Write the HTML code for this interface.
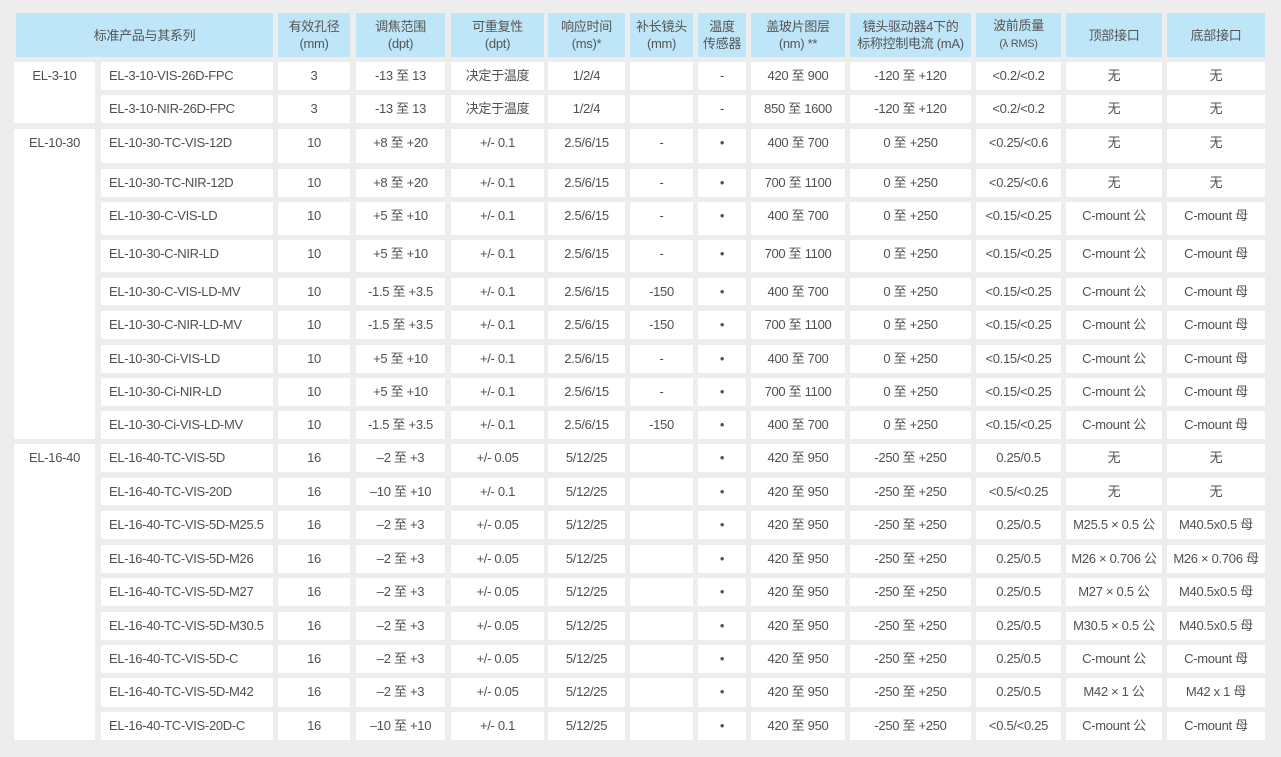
<!DOCTYPE html>
<html><head><meta charset="utf-8"><style>
body{margin:0;width:1281px;height:757px;background:#ededed;position:relative;overflow:hidden;font-family:"Liberation Sans","Noto Sans CJK SC",sans-serif;color:#505050;font-size:13px;letter-spacing:-0.3px}
.r{position:absolute;left:0;width:1281px}
.r>div{position:absolute;top:0;height:100%;background:#fff;text-align:center;line-height:28px;white-space:nowrap;overflow:hidden}
.h>div{background:#bee6f8;line-height:17px;display:flex;align-items:center;justify-content:center;color:#555}
.h>div>span{display:block;text-align:center}
.c0{left:14px;width:81px}.c1{left:101px;width:172px;text-align:left!important;padding-left:8px;box-sizing:border-box}
.c2{left:278px;width:72px}.c3{left:356px;width:89px}.c4{left:451px;width:93px}.c5{left:548px;width:77px}
.c6{left:630px;width:63px}.c7{left:698px;width:48px}.c8{left:751px;width:94px}.c9{left:850px;width:121px}
.c10{left:976px;width:85px}.c11{left:1066px;width:96px}.c12{left:1167px;width:98px}
.g{position:absolute;left:14px;width:81px;background:#fff;text-align:center;line-height:28px}
.s{font-size:11px}
</style></head><body>
<div class="r h" style="top:13px;height:44px">
<div style="left:16px;width:257px"><span>标准产品与其系列</span></div>
<div class="c2"><span>有效孔径<br>(mm)</span></div><div class="c3"><span>调焦范围<br>(dpt)</span></div><div class="c4"><span>可重复性<br>(dpt)</span></div>
<div class="c5"><span>响应时间<br>(ms)*</span></div><div class="c6"><span>补长镜头<br>(mm)</span></div><div class="c7"><span>温度<br>传感器</span></div>
<div class="c8"><span>盖玻片图层<br>(nm) **</span></div><div class="c9"><span>镜头驱动器4下的<br>标称控制电流 (mA)</span></div>
<div class="c10"><span>波前质量<br><span class="s">(λ RMS)</span></span></div><div class="c11"><span>顶部接口</span></div><div class="c12"><span>底部接口</span></div>
</div>
<div class="g" style="top:62px;height:61px">EL-3-10</div>
<div class="g" style="top:129px;height:310px">EL-10-30</div>
<div class="g" style="top:444px;height:296px">EL-16-40</div>

<div class="r" style="top:62px;height:28px"><div class="c1">EL-3-10-VIS-26D-FPC</div><div class="c2">3</div><div class="c3">-13 至 13</div><div class="c4">决定于温度</div><div class="c5">1/2/4</div><div class="c6"></div><div class="c7">-</div><div class="c8">420 至 900</div><div class="c9">-120 至 +120</div><div class="c10">&lt;0.2/&lt;0.2</div><div class="c11">无</div><div class="c12">无</div></div>
<div class="r" style="top:95px;height:28px"><div class="c1">EL-3-10-NIR-26D-FPC</div><div class="c2">3</div><div class="c3">-13 至 13</div><div class="c4">决定于温度</div><div class="c5">1/2/4</div><div class="c6"></div><div class="c7">-</div><div class="c8">850 至 1600</div><div class="c9">-120 至 +120</div><div class="c10">&lt;0.2/&lt;0.2</div><div class="c11">无</div><div class="c12">无</div></div>

<div class="r" style="top:129px;height:34px"><div class="c1">EL-10-30-TC-VIS-12D</div><div class="c2">10</div><div class="c3">+8 至 +20</div><div class="c4">+/- 0.1</div><div class="c5">2.5/6/15</div><div class="c6">-</div><div class="c7">•</div><div class="c8">400 至 700</div><div class="c9">0 至 +250</div><div class="c10">&lt;0.25/&lt;0.6</div><div class="c11">无</div><div class="c12">无</div></div>
<div class="r" style="top:169px;height:28px"><div class="c1">EL-10-30-TC-NIR-12D</div><div class="c2">10</div><div class="c3">+8 至 +20</div><div class="c4">+/- 0.1</div><div class="c5">2.5/6/15</div><div class="c6">-</div><div class="c7">•</div><div class="c8">700 至 1100</div><div class="c9">0 至 +250</div><div class="c10">&lt;0.25/&lt;0.6</div><div class="c11">无</div><div class="c12">无</div></div>
<div class="r" style="top:202px;height:33px"><div class="c1">EL-10-30-C-VIS-LD</div><div class="c2">10</div><div class="c3">+5 至 +10</div><div class="c4">+/- 0.1</div><div class="c5">2.5/6/15</div><div class="c6">-</div><div class="c7">•</div><div class="c8">400 至 700</div><div class="c9">0 至 +250</div><div class="c10">&lt;0.15/&lt;0.25</div><div class="c11">C-mount 公</div><div class="c12">C-mount 母</div></div>
<div class="r" style="top:240px;height:32px"><div class="c1">EL-10-30-C-NIR-LD</div><div class="c2">10</div><div class="c3">+5 至 +10</div><div class="c4">+/- 0.1</div><div class="c5">2.5/6/15</div><div class="c6">-</div><div class="c7">•</div><div class="c8">700 至 1100</div><div class="c9">0 至 +250</div><div class="c10">&lt;0.15/&lt;0.25</div><div class="c11">C-mount 公</div><div class="c12">C-mount 母</div></div>
<div class="r" style="top:278px;height:27px"><div class="c1">EL-10-30-C-VIS-LD-MV</div><div class="c2">10</div><div class="c3">-1.5 至 +3.5</div><div class="c4">+/- 0.1</div><div class="c5">2.5/6/15</div><div class="c6">-150</div><div class="c7">•</div><div class="c8">400 至 700</div><div class="c9">0 至 +250</div><div class="c10">&lt;0.15/&lt;0.25</div><div class="c11">C-mount 公</div><div class="c12">C-mount 母</div></div>
<div class="r" style="top:311px;height:28px"><div class="c1">EL-10-30-C-NIR-LD-MV</div><div class="c2">10</div><div class="c3">-1.5 至 +3.5</div><div class="c4">+/- 0.1</div><div class="c5">2.5/6/15</div><div class="c6">-150</div><div class="c7">•</div><div class="c8">700 至 1100</div><div class="c9">0 至 +250</div><div class="c10">&lt;0.15/&lt;0.25</div><div class="c11">C-mount 公</div><div class="c12">C-mount 母</div></div>
<div class="r" style="top:345px;height:28px"><div class="c1">EL-10-30-Ci-VIS-LD</div><div class="c2">10</div><div class="c3">+5 至 +10</div><div class="c4">+/- 0.1</div><div class="c5">2.5/6/15</div><div class="c6">-</div><div class="c7">•</div><div class="c8">400 至 700</div><div class="c9">0 至 +250</div><div class="c10">&lt;0.15/&lt;0.25</div><div class="c11">C-mount 公</div><div class="c12">C-mount 母</div></div>
<div class="r" style="top:378px;height:28px"><div class="c1">EL-10-30-Ci-NIR-LD</div><div class="c2">10</div><div class="c3">+5 至 +10</div><div class="c4">+/- 0.1</div><div class="c5">2.5/6/15</div><div class="c6">-</div><div class="c7">•</div><div class="c8">700 至 1100</div><div class="c9">0 至 +250</div><div class="c10">&lt;0.15/&lt;0.25</div><div class="c11">C-mount 公</div><div class="c12">C-mount 母</div></div>
<div class="r" style="top:411px;height:28px"><div class="c1">EL-10-30-Ci-VIS-LD-MV</div><div class="c2">10</div><div class="c3">-1.5 至 +3.5</div><div class="c4">+/- 0.1</div><div class="c5">2.5/6/15</div><div class="c6">-150</div><div class="c7">•</div><div class="c8">400 至 700</div><div class="c9">0 至 +250</div><div class="c10">&lt;0.15/&lt;0.25</div><div class="c11">C-mount 公</div><div class="c12">C-mount 母</div></div>

<div class="r" style="top:444px;height:28px"><div class="c1">EL-16-40-TC-VIS-5D</div><div class="c2">16</div><div class="c3">–2 至 +3</div><div class="c4">+/- 0.05</div><div class="c5">5/12/25</div><div class="c6"></div><div class="c7">•</div><div class="c8">420 至 950</div><div class="c9">-250 至 +250</div><div class="c10">0.25/0.5</div><div class="c11">无</div><div class="c12">无</div></div>
<div class="r" style="top:478px;height:27px"><div class="c1">EL-16-40-TC-VIS-20D</div><div class="c2">16</div><div class="c3">–10 至 +10</div><div class="c4">+/- 0.1</div><div class="c5">5/12/25</div><div class="c6"></div><div class="c7">•</div><div class="c8">420 至 950</div><div class="c9">-250 至 +250</div><div class="c10">&lt;0.5/&lt;0.25</div><div class="c11">无</div><div class="c12">无</div></div>
<div class="r" style="top:511px;height:28px"><div class="c1">EL-16-40-TC-VIS-5D-M25.5</div><div class="c2">16</div><div class="c3">–2 至 +3</div><div class="c4">+/- 0.05</div><div class="c5">5/12/25</div><div class="c6"></div><div class="c7">•</div><div class="c8">420 至 950</div><div class="c9">-250 至 +250</div><div class="c10">0.25/0.5</div><div class="c11">M25.5 × 0.5 公</div><div class="c12">M40.5x0.5 母</div></div>
<div class="r" style="top:545px;height:28px"><div class="c1">EL-16-40-TC-VIS-5D-M26</div><div class="c2">16</div><div class="c3">–2 至 +3</div><div class="c4">+/- 0.05</div><div class="c5">5/12/25</div><div class="c6"></div><div class="c7">•</div><div class="c8">420 至 950</div><div class="c9">-250 至 +250</div><div class="c10">0.25/0.5</div><div class="c11">M26 × 0.706 公</div><div class="c12">M26 × 0.706 母</div></div>
<div class="r" style="top:578px;height:28px"><div class="c1">EL-16-40-TC-VIS-5D-M27</div><div class="c2">16</div><div class="c3">–2 至 +3</div><div class="c4">+/- 0.05</div><div class="c5">5/12/25</div><div class="c6"></div><div class="c7">•</div><div class="c8">420 至 950</div><div class="c9">-250 至 +250</div><div class="c10">0.25/0.5</div><div class="c11">M27 × 0.5 公</div><div class="c12">M40.5x0.5 母</div></div>
<div class="r" style="top:612px;height:28px"><div class="c1">EL-16-40-TC-VIS-5D-M30.5</div><div class="c2">16</div><div class="c3">–2 至 +3</div><div class="c4">+/- 0.05</div><div class="c5">5/12/25</div><div class="c6"></div><div class="c7">•</div><div class="c8">420 至 950</div><div class="c9">-250 至 +250</div><div class="c10">0.25/0.5</div><div class="c11">M30.5 × 0.5 公</div><div class="c12">M40.5x0.5 母</div></div>
<div class="r" style="top:645px;height:28px"><div class="c1">EL-16-40-TC-VIS-5D-C</div><div class="c2">16</div><div class="c3">–2 至 +3</div><div class="c4">+/- 0.05</div><div class="c5">5/12/25</div><div class="c6"></div><div class="c7">•</div><div class="c8">420 至 950</div><div class="c9">-250 至 +250</div><div class="c10">0.25/0.5</div><div class="c11">C-mount 公</div><div class="c12">C-mount 母</div></div>
<div class="r" style="top:678px;height:29px"><div class="c1">EL-16-40-TC-VIS-5D-M42</div><div class="c2">16</div><div class="c3">–2 至 +3</div><div class="c4">+/- 0.05</div><div class="c5">5/12/25</div><div class="c6"></div><div class="c7">•</div><div class="c8">420 至 950</div><div class="c9">-250 至 +250</div><div class="c10">0.25/0.5</div><div class="c11">M42 × 1 公</div><div class="c12">M42 x 1 母</div></div>
<div class="r" style="top:712px;height:28px"><div class="c1">EL-16-40-TC-VIS-20D-C</div><div class="c2">16</div><div class="c3">–10 至 +10</div><div class="c4">+/- 0.1</div><div class="c5">5/12/25</div><div class="c6"></div><div class="c7">•</div><div class="c8">420 至 950</div><div class="c9">-250 至 +250</div><div class="c10">&lt;0.5/&lt;0.25</div><div class="c11">C-mount 公</div><div class="c12">C-mount 母</div></div>
</body></html>
